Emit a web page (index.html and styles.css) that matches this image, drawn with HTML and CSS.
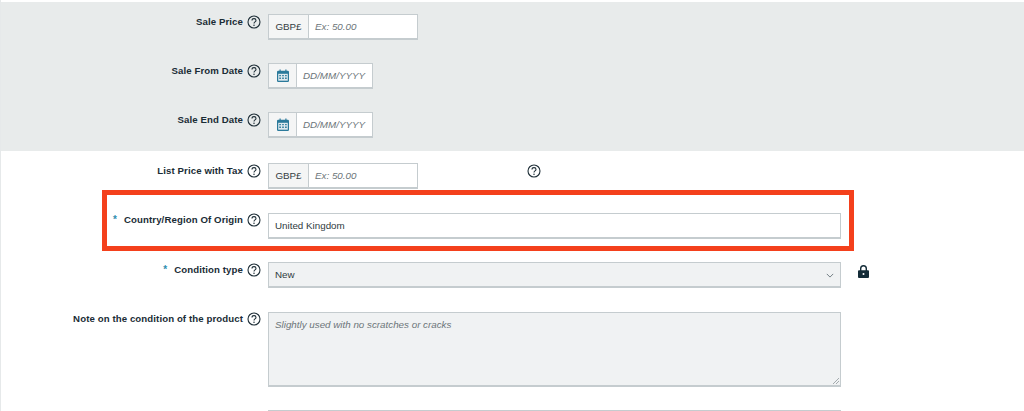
FILE: index.html
```html
<!DOCTYPE html>
<html lang="en">
<head>
<meta charset="utf-8">
<title>Product form</title>
<link rel="stylesheet" href="styles.css">
</head>
<body>
<svg class="defs" width="0" height="0" aria-hidden="true">
  <symbol id="help" viewBox="0 0 14 14">
    <circle cx="7" cy="7" r="6" fill="none" stroke="#1f2f38" stroke-width="1.1"/>
    <path d="M5 5.5C5 4.3 5.9 3.6 7 3.6s2 .7 2 1.8c0 1.5-2 1.5-2 3" fill="none" stroke="#1f2f38" stroke-width="1.1"/>
    <circle cx="7" cy="10.3" r=".75" fill="#1f2f38"/>
  </symbol>
  <symbol id="cal" viewBox="0 0 12 13">
    <path d="M0 3a1.2 1.2 0 0 1 1.2-1.2H2.5V.5h1.2v1.3h4.600V.5h1.200v1.300h1.300A1.200 1.200 0 0 1 12 3v8.800a1.200 1.200 0 0 1-1.200 1.200H1.200A1.200 1.200 0 0 1 0 11.800z" fill="#2b7a9b"/>
    <path d="M1.200 4.800h9.600v6.900H1.200z" fill="#dfe9ee"/>
    <path d="M2.300 6h1.600v1.300H2.300zM5.200 6h1.600v1.300H5.200zM8.100 6h1.600v1.300H8.100zM2.300 8.600h1.600v1.300H2.300zM5.200 8.600h1.600v1.300H5.200zM8.100 8.600h1.600v1.300H8.100z" fill="#2b7a9b"/>
  </symbol>
</svg>
<main class="page">
  <section class="sale">
    <div class="row">
      <div class="label">Sale Price</div>
      <svg class="help"><use href="#help"/></svg>
      <div class="field w-money"><span class="addon addon-text">GBP£</span><span class="value ph">Ex: 50.00</span></div>
    </div>
    <div class="row">
      <div class="label">Sale From Date</div>
      <svg class="help"><use href="#help"/></svg>
      <div class="field w-date"><span class="addon addon-icon"><svg class="cal"><use href="#cal"/></svg></span><span class="value ph">DD/MM/YYYY</span></div>
    </div>
    <div class="row">
      <div class="label">Sale End Date</div>
      <svg class="help"><use href="#help"/></svg>
      <div class="field w-date"><span class="addon addon-icon"><svg class="cal"><use href="#cal"/></svg></span><span class="value ph">DD/MM/YYYY</span></div>
    </div>
  </section>
  <section class="rest">
    <div class="row">
      <div class="label">List Price with Tax</div>
      <svg class="help"><use href="#help"/></svg>
      <div class="field w-money"><span class="addon addon-text">GBP£</span><span class="value ph">Ex: 50.00</span></div>
      <svg class="help help-far"><use href="#help"/></svg>
    </div>
    <div class="row">
      <div class="label"><span class="req">*</span>Country/Region Of Origin</div>
      <svg class="help"><use href="#help"/></svg>
      <div class="field w-full"><span class="value">United Kingdom</span></div>
    </div>
    <div class="row">
      <div class="label"><span class="req">*</span>Condition type</div>
      <svg class="help"><use href="#help"/></svg>
      <div class="field w-full disabled"><span class="value">New</span>
        <svg class="chev" viewBox="0 0 10 6"><path d="M1 1l4 4 4-4" fill="none" stroke="#6f7a80" stroke-width="1.2"/></svg>
      </div>
      <svg class="lock" viewBox="0 0 11 13"><path d="M2 5.200V3.600a3.500 3.500 0 0 1 7 0v1.600h1a1 1 0 0 1 1 1V12a1 1 0 0 1-1 1H1a1 1 0 0 1-1-1V6.200a1 1 0 0 1 1-1zM3.400 5.200h4.200V3.600a2.100 2.100 0 0 0-4.200 0z" fill="#142c38" fill-rule="evenodd"/><circle cx="5.500" cy="9" r="1" fill="#fff"/></svg>
    </div>
    <div class="row">
      <div class="label">Note on the condition of the product</div>
      <svg class="help"><use href="#help"/></svg>
      <div class="field w-full area disabled"><span class="value ph">Slightly used with no scratches or cracks</span>
        <svg class="grip" viewBox="0 0 8 8"><path d="M0 8l8-8M4 8l4-4" stroke="#8b9397" stroke-width="1"/></svg>
      </div>
    </div>
    <div class="row"><div class="label"></div><div class="help"></div><div class="field w-full"></div></div>
  </section>
  <div class="highlight"></div>
</main>
</body>
</html>
```
FILE: styles.css
```css
html, body {
  margin: 0;
  padding: 0;
  height: 411px;
  overflow: hidden;
  background: #fff;
}
.defs { position: absolute; }
.page {
  position: relative;
  height: 411px;
  overflow: hidden;
  padding-top: 2px;
  box-sizing: border-box;
  font-family: "Liberation Sans", Arial, sans-serif;
  font-size: 9px;
  color: #1f2f38;
  border-left: 1px solid #e6e9ea;
}
.sale {
  background: #e8ebeb;
  height: 149px;
  padding-top: 12px;
  box-sizing: border-box;
}
.rest { padding-top: 12px; }
.row {
  display: flex;
  align-items: flex-start;
  margin-bottom: 23px;
}
.rest .row { margin-bottom: 23.5px; }
.label {
  width: 242px;
  flex: none;
  text-align: right;
  font-weight: 700;
  font-size: 9.65px;
  line-height: 12px;
  padding-top: 1.5px;
  letter-spacing: .1px;
  color: #1a2c35;
  box-sizing: border-box;
}
.req {
  color: #2f8fb0;
  margin-right: 7px;
  font-size: 10px;
}
.help {
  width: 14px;
  height: 14px;
  flex: none;
  margin: 0.500px 7px 0 4px;
}
.help-far { margin-left: 109px; }
.field {
  display: flex;
  align-items: center;
  box-sizing: border-box;
  height: 26px;
  flex: none;
  border: 1px solid #c5cccf;
  border-bottom-width: 2px;
  background: #fff;
  position: relative;
}
.w-money { width: 150px; }
.w-date { width: 105px; }
.w-full { width: 573px; }
.addon {
  display: flex;
  align-items: center;
  justify-content: center;
  height: 100%;
  background: #f4f5f5;
  border-right: 1px solid #c5cccf;
  box-sizing: border-box;
  flex: none;
}
.addon-text { width: 40px; font-size: 9.8px; color: #333d42; }
.addon-icon { width: 28px; }
.cal { width: 12px; height: 13px; }
.value {
  padding-left: 6px;
  font-size: 9.8px;
  color: #2f3a40;
}
.ph { font-style: italic; color: #6c7579; }
.disabled { background: #f0f2f3; }
.chev {
  position: absolute;
  right: 6px;
  top: 10px;
  width: 8px;
  height: 5px;
}
.lock {
  width: 11px;
  height: 13px;
  margin: 3px 0 0 17px;
  flex: none;
}
.area {
  height: 75px;
  align-items: flex-start;
  padding-top: 6px;
}
.grip {
  position: absolute;
  right: 1px;
  bottom: 1px;
  width: 6px;
  height: 6px;
}
.highlight {
  position: absolute;
  left: 101px;
  top: 190px;
  width: 752px;
  height: 61px;
  box-sizing: border-box;
  border: 5px solid #f4401c;
}
```
